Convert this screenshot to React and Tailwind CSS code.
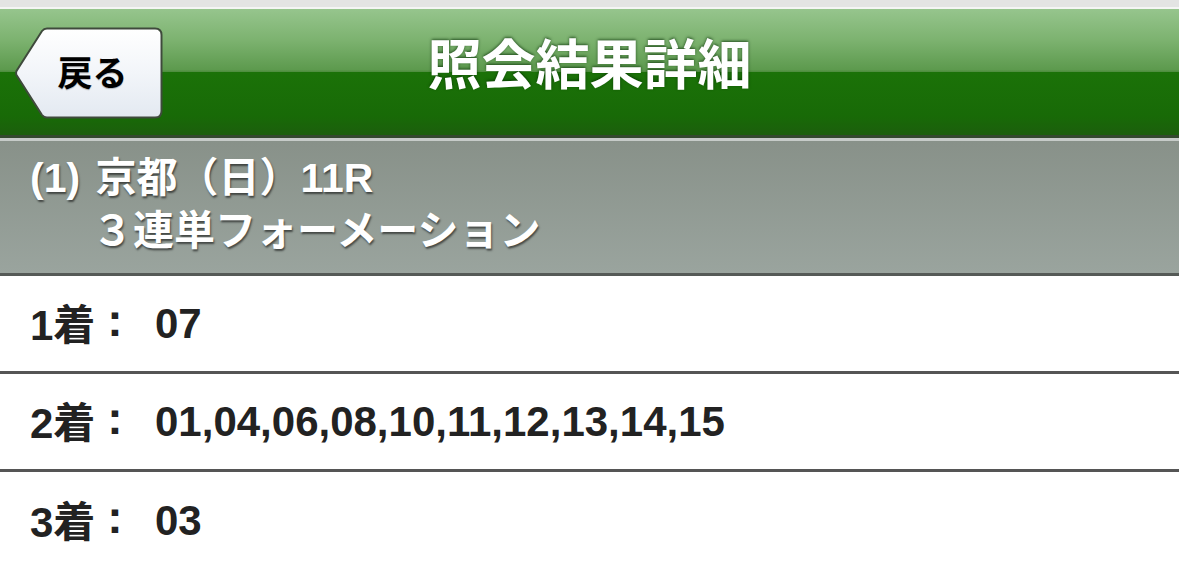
import React from 'react';

const rows = [
  { label: '1着', value: '07' },
  { label: '2着', value: '01,04,06,08,10,11,12,13,14,15' },
  { label: '3着', value: '03' },
];

const font = 'font-["Liberation_Sans","Noto_Sans_CJK_JP",sans-serif]';

const BackButton = () => (
  <button type="button" className="relative w-[149px] h-[92px] flex items-center justify-center pl-[8px]">
    <svg className="absolute inset-0" width="149" height="92" viewBox="0 0 149 92">
      <defs>
        <linearGradient id="backFill" x1="0" y1="0" x2="0" y2="1">
          <stop offset="0" stopColor="#ffffff" />
          <stop offset="0.5" stopColor="#f2f5f9" />
          <stop offset="1" stopColor="#e3e9f1" />
        </linearGradient>
      </defs>
      <path
        d="M33 1.5 H141 Q147.5 1.5 147.5 8 V84 Q147.5 90.5 141 90.5 H33 Q30 90.5 28 88 L2.5 48 Q1.5 46 2.5 44 L28 4 Q30 1.5 33 1.5 Z"
        fill="url(#backFill)"
        stroke="#3f4a3c"
        strokeWidth="2"
      />
    </svg>
    <span className="relative text-[35px] font-bold text-black leading-none [text-shadow:0_1px_1px_rgba(0,0,0,0.25)]">戻る</span>
  </button>
);

const App = () => {
  return (
    <div className={`min-h-screen bg-white ${font}`}>
      <div className="h-[9px] bg-[#e3e4e3] border-b-[2px] border-[#f4f5f4]" />

      <header className="grid grid-cols-[1fr_auto_1fr] items-start h-[129px] border-b-[3px] border-[#34482f] bg-[linear-gradient(to_bottom,#96c58d_0%,#7cb26f_25%,#5d9a4e_48%,#4d8c3d_50%,#1b7208_50%,#186a07_85%,#1c5e0d_100%)]">
        <div className="pt-[18px] pl-[14px]">
          <BackButton />
        </div>
        <h1 className="pt-[30px] text-[54px] font-bold text-white leading-none [text-shadow:0_-1px_3px_rgba(0,40,0,0.7)]">
          照会結果詳細
        </h1>
        <div />
      </header>

      <div className="border-t-[3px] border-[#c6cbc8] border-b-[3px] border-b-[#555a57] bg-[linear-gradient(to_bottom,#889189,#9aa49e)] h-[138px] pt-[11px] pl-[30px] text-white font-bold text-[41px] leading-[53px] [text-shadow:1px_2px_2px_rgba(0,0,0,0.55)]">
        <div>
          (1) <span className="ml-[4px]">京都（日）11R</span>
        </div>
        <div className="pl-[62px]">３連単フォーメーション</div>
      </div>

      {rows.map((row, i) => (
        <div
          key={row.label}
          className={`flex items-center h-[98px] pl-[30px] text-[42px] font-bold text-[#222] ${i < rows.length - 1 ? 'border-b-[3px] border-[#555]' : ''}`}
        >
          <span className="w-[125px] leading-none">
            {row.label}
            <span className="inline-block ml-[12px] text-[46px] -translate-y-[4px]">:</span>
          </span>
          <span className="leading-none">{row.value}</span>
        </div>
      ))}
    </div>
  );
};

export default App;
